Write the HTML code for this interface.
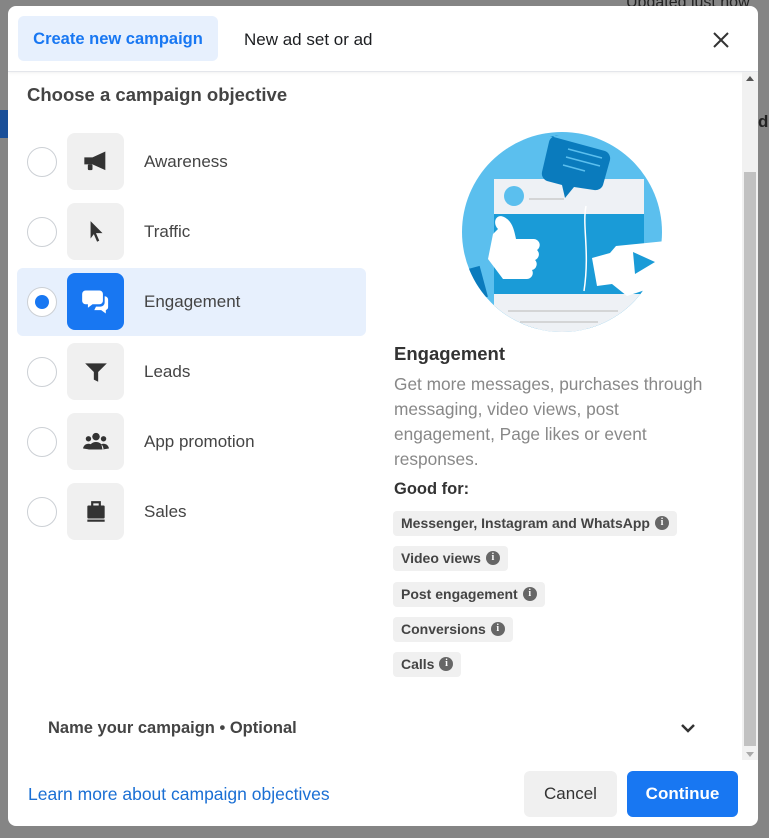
<!DOCTYPE html>
<html><head><style>
*{box-sizing:border-box;margin:0;padding:0}
body{width:769px;height:838px;background:#858585;font-family:"Liberation Sans",sans-serif;position:relative;overflow:hidden}
.abs{position:absolute}
.modal{position:absolute;left:8px;top:6px;width:750px;height:820px;background:#fff;border-radius:8px;overflow:hidden}
.hdr{position:absolute;left:0;top:0;width:750px;height:66px;border-bottom:1px solid #e4e6eb;box-shadow:0 1px 3px rgba(0,0,0,.06)}
.tab{position:absolute;left:10px;top:10px;width:200px;height:45px;background:#e7f0fd;border-radius:6px;color:#1877f2;font-weight:bold;font-size:16.5px;line-height:47px;text-align:center}
.tab2{position:absolute;left:236px;top:10px;height:45px;line-height:47px;font-size:17px;color:#1c1e21}
.title{position:absolute;left:19px;top:78px;font-size:18.5px;font-weight:bold;color:#444}
.row{position:absolute;left:9px;width:349px;height:68px;border-radius:6px}
.radio{position:absolute;left:10px;top:19px;width:30px;height:30px;border:1px solid #ccd0d5;border-radius:50%;background:#fff}
.ib{position:absolute;left:50px;top:5px;width:57px;height:57px;background:#f0f0f0;border-radius:8px;display:flex;align-items:center;justify-content:center}
.lbl{position:absolute;left:127px;top:24px;font-size:17px;color:#444}
.pill{position:absolute;left:393px;height:25px;background:#f0f0f0;border-radius:4px;font-size:14px;font-weight:bold;color:#444;line-height:25px;padding:0 8px;white-space:nowrap}
.i{display:inline-block;position:relative;top:-1px;width:14px;height:14px;border-radius:50%;background:#666;color:#fff;font-size:10px;line-height:14px;text-align:center;vertical-align:middle;margin-left:5px;font-family:"Liberation Serif",serif;font-weight:bold}
</style></head><body>
<div class="abs" style="left:0;top:110px;width:8px;height:28px;background:#1a4f99"></div>
<div class="abs" style="left:626px;top:-6px;font-size:16px;color:#222">Updated just now</div>
<div class="abs" style="left:758px;top:112px;font-size:17px;font-weight:bold;color:#222">ds</div>
<div class="modal">
 <div class="hdr"><div class="tab">Create new campaign</div><div class="tab2">New ad set or ad</div>
  <svg class="abs" style="left:704px;top:25px" width="18" height="18" viewBox="0 0 18 18"><path d="M2 2L16 16M16 2L2 16" stroke="#333" stroke-width="2"/></svg></div>
 <div class="abs" style="left:734px;top:66px;width:16px;height:688px;background:#f1f1f1"></div>
 <div class="abs" style="left:736px;top:166px;width:12px;height:574px;background:#c1c1c1"></div>
 <div class="abs" style="left:738px;top:70px;width:0;height:0;border:4px solid transparent;border-bottom:5px solid #555;border-top:0"></div>
 <div class="abs" style="left:738px;top:746px;width:0;height:0;border:4px solid transparent;border-top:5px solid #aaa;border-bottom:0"></div>
 <div class="title">Choose a campaign objective</div>

 <div class="row" style="top:122px"><div class="radio"></div><div class="ib"><svg width="28" height="28" viewBox="0 0 24 24"><path d="M2 8h7l11-5v16l-11-5H2z" fill="#333"/><rect x="5" y="14" width="4" height="5" rx="1" fill="#333"/></svg></div><div class="lbl">Awareness</div></div>
 <div class="row" style="top:192px"><div class="radio"></div><div class="ib"><svg width="26" height="26" viewBox="0 0 24 24"><path d="M7 2l11 11h-6l3 7-2 1-3-7-3 4z" fill="#333"/></svg></div><div class="lbl">Traffic</div></div>
 <div class="row" style="top:262px;background:#e7f0fd"><div class="radio"><div class="abs" style="left:7px;top:7px;width:14px;height:14px;border-radius:50%;background:#1877f2"></div></div><div class="ib" style="background:#1877f2"><svg width="30" height="30" viewBox="0 0 26 26"><path d="M4 3h12a3 3 0 0 1 3 3v6a3 3 0 0 1-3 3H10l-4 3v-3H4a3 3 0 0 1-3-3V6a3 3 0 0 1 3-3z" fill="#fff"/><path d="M20.5 8a3 3 0 0 1 3 3v6a3 3 0 0 1-2 3v3l-4-3h-6l1.5-3h4a3.5 3.5 0 0 0 3.5-3.5z" fill="#fff"/></svg></div><div class="lbl">Engagement</div></div>
 <div class="row" style="top:332px"><div class="radio"></div><div class="ib"><svg width="26" height="26" viewBox="0 0 24 24"><path d="M2 4h20l-8 8v9l-4-2v-7z" fill="#333"/></svg></div><div class="lbl">Leads</div></div>
 <div class="row" style="top:402px"><div class="radio"></div><div class="ib"><svg width="28" height="24" viewBox="0 0 26 22"><circle cx="13" cy="6" r="3.5" fill="#333"/><circle cx="6" cy="8" r="2.5" fill="#333"/><circle cx="20" cy="8" r="2.5" fill="#333"/><path d="M6 18a7 7 0 0 1 14 0z M1 17a5 5 0 0 1 7-4l-1 5z M25 17a5 5 0 0 0-7-4l1 5z" fill="#333"/></svg></div><div class="lbl">App promotion</div></div>
 <div class="row" style="top:472px"><div class="radio"></div><div class="ib"><svg width="26" height="26" viewBox="0 0 24 24"><path d="M8.5 6V3h7v3" stroke="#333" stroke-width="2" fill="none"/><rect x="4" y="6" width="16" height="12" rx="1" fill="#333"/><rect x="4" y="19" width="16" height="2" fill="#333"/></svg></div><div class="lbl">Sales</div></div>

 <svg class="abs" style="left:450px;top:118px" width="210" height="215" viewBox="0 0 210 215">
  <defs><clipPath id="c"><circle cx="104" cy="108" r="100"/></clipPath></defs>
  <circle cx="104" cy="108" r="100" fill="#5bbfee"/>
  <g clip-path="url(#c)">
   <rect x="36" y="55" width="150" height="150" fill="#1a9bd7"/>
   <rect x="36" y="55" width="150" height="35" fill="#eef1f5"/>
   <rect x="36" y="170" width="150" height="50" fill="#eef1f5"/>
   <line x1="50" y1="187" x2="160" y2="187" stroke="#ccc" stroke-width="1.5"/>
   <line x1="62" y1="198" x2="140" y2="198" stroke="#ccc" stroke-width="1.5"/>
   <rect x="-2" y="145" width="28" height="32" fill="#0a7bbd" transform="rotate(-15 12 160)"/>
  </g>
  <circle cx="56" cy="72" r="10" fill="#5bbfee"/>
  <line x1="71" y1="75" x2="106" y2="75" stroke="#ccc" stroke-width="1.5"/>
  <path d="M92 12l55 15a8 8 0 0 1 5 9l-7 25a8 8 0 0 1-9 5l-20-3-9 11-3-13-15-4a8 8 0 0 1-5-9l7-30a8 8 0 0 1 10-6z" fill="#0a7bbd"/>
  <path d="M110 25l34 9M108 33l34 9M105 41l22 6" stroke="#5bbfee" stroke-width="1.5"/>
  <path d="M128 82c-4 20 4 45-2 85" stroke="#fff" fill="none" stroke-width="1.5"/>
  <path d="M40 105c-6-6-2-16 6-12 8 4 10 12 12 22h18a6 6 0 0 1 3 11 6 6 0 0 1-2 10 6 6 0 0 1-3 10 6 6 0 0 1-5 9H45l-15-20 5-25z" fill="#fff"/>
  <path d="M158 122l50 -5 6 40-45 15-15-12-15 2-5-28 18-5z" fill="#fff"/>
  <path d="M175 128l22 10-20 12z" fill="#1a9bd7"/>
 </svg>

 <div class="abs" style="left:386px;top:337px;font-size:18.5px;font-weight:bold;color:#333">Engagement</div>
 <div class="abs" style="left:386px;top:366px;width:322px;font-size:17.3px;line-height:25px;color:#888">Get more messages, purchases through messaging, video views, post engagement, Page likes or event responses.</div>
 <div class="abs" style="left:386px;top:474px;font-size:16.5px;font-weight:bold;color:#333">Good for:</div>
 <div class="pill" style="top:505px;left:385px">Messenger, Instagram and WhatsApp<span class="i">i</span></div>
 <div class="pill" style="top:540px;left:385px">Video views<span class="i">i</span></div>
 <div class="pill" style="top:576px;left:385px">Post engagement<span class="i">i</span></div>
 <div class="pill" style="top:611px;left:385px">Conversions<span class="i">i</span></div>
 <div class="pill" style="top:646px;left:385px">Calls<span class="i">i</span></div>

 <div class="abs" style="left:40px;top:713px;font-size:16.5px;font-weight:bold;color:#444">Name your campaign • Optional</div>
 <svg class="abs" style="left:672px;top:716px" width="16" height="12" viewBox="0 0 16 12"><path d="M2 3l6 6 6-6" stroke="#333" stroke-width="2.5" fill="none"/></svg>
 <div class="abs" style="left:20px;top:778px;font-size:17.5px;color:#1a6fd4">Learn more about campaign objectives</div>
 <div class="abs" style="left:516px;top:765px;width:93px;height:46px;background:#f0f0f0;border-radius:6px;font-size:17px;color:#333;text-align:center;line-height:46px">Cancel</div>
 <div class="abs" style="left:619px;top:765px;width:111px;height:46px;background:#1877f2;border-radius:6px;font-size:17px;font-weight:bold;color:#fff;text-align:center;line-height:46px">Continue</div>
</div>
</body></html>
